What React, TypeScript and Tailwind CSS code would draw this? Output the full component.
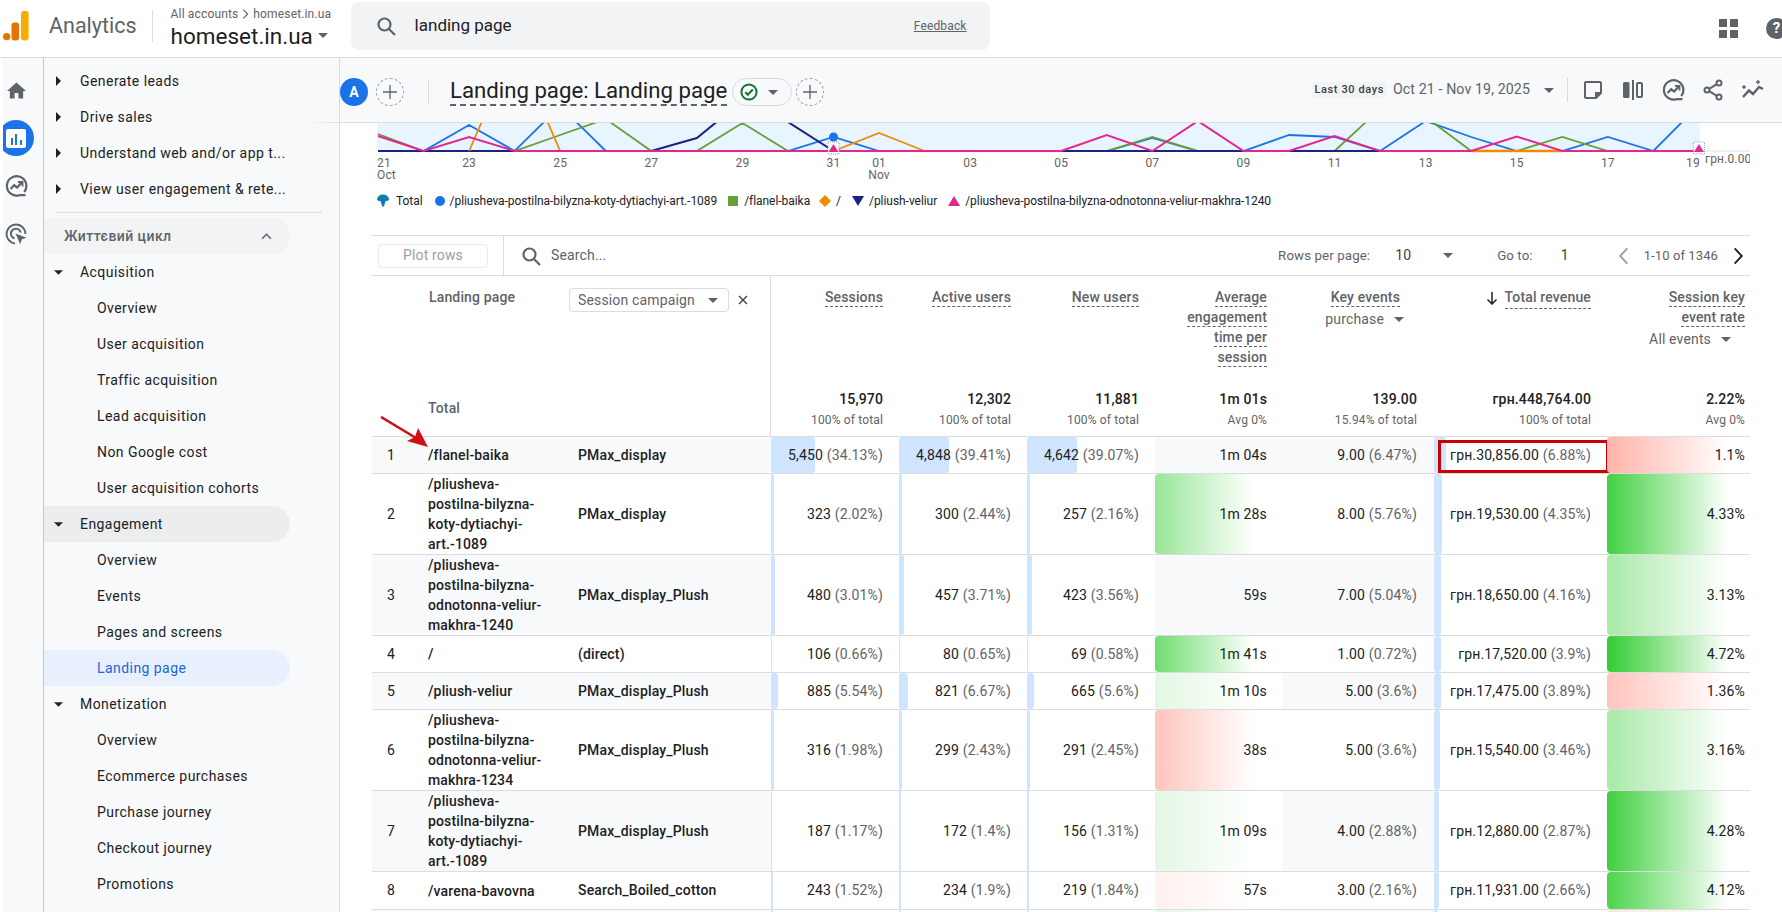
import React from "react";

const X = (d: number) => 378 + 45.55 * d;
const pts = (a: [number, number][]) => a.map(([d, y]) => `${X(d)},${y}`).join(" ");
const BASE = 150;
const series = (over: Record<number, number>, from = 0, to = 29) => {
  const r: [number, number][] = [];
  for (let d = from; d <= to; d++) r.push([d, over[d] ?? BASE]);
  return r;
};
const blue = series({ 2: 124, 4: 105, 5: 150, 10: 136, 20: 134, 21: 136, 23: 120, 24: 136, 17: 137, 27: 136, 29: 104 });
const green = series({ 0: 133, 4: 134, 5: 118, 8: 122, 17: 136, 22: 108, 23: 116, 26: 136 });
const navy = series({ 7: 137, 8: 100, 9: 121 }, 0, 24);
const orange = series({ 3: 45, 11: 132 }, 2, 12);
const orange2 = series({}, 24, 26);
const pink = series({ 0: 135, 2: 136, 16: 134, 18: 120, 21: 135, 25: 135.5 });

const ticks = [
  ["23", 2], ["25", 4], ["27", 6], ["29", 8], ["31", 10], ["01", 11], ["03", 13], ["05", 15], ["07", 17], ["09", 19], ["11", 21], ["13", 23], ["15", 25], ["17", 27],
] as [string, number][];

const I = ({ children, className = "w-6 h-6" }: { children: React.ReactNode; className?: string }) => (
  <svg viewBox="0 0 24 24" className={className} fill="none" stroke="#5f6368" strokeWidth="2">{children}</svg>
);
const CaretDown = ({ className = "" }: { className?: string }) => (
  <svg viewBox="0 0 10 5" className={`w-[10px] h-[5px] ${className}`}><path d="M0 0h10L5 5z" fill="#5f6368" /></svg>
);
const Insights = ({ className = "w-6 h-6" }: { className?: string }) => (
  <I className={className}>
    <path d="M20.2 18A9.7 9.7 0 1 0 15.5 21.2H21.5" strokeWidth="2.2" />
    <path d="M6.5 15l3.7-3.7 3 2.2 4.6-5" strokeWidth="2.2" />
    <path d="M14 8h4.5v4.5" strokeWidth="1.8" />
  </I>
);

const navTop = ["Generate leads", "Drive sales", "Understand web and/or app t...", "View user engagement & rete..."];
const navLife: { t: string; head?: boolean; active?: boolean; hl?: boolean }[] = [
  { t: "Acquisition", head: true },
  { t: "Overview" }, { t: "User acquisition" }, { t: "Traffic acquisition" }, { t: "Lead acquisition" }, { t: "Non Google cost" }, { t: "User acquisition cohorts" },
  { t: "Engagement", head: true, hl: true },
  { t: "Overview" }, { t: "Events" }, { t: "Pages and screens" }, { t: "Landing page", active: true },
  { t: "Monetization", head: true },
  { t: "Overview" }, { t: "Ecommerce purchases" }, { t: "Purchase journey" }, { t: "Checkout journey" }, { t: "Promotions" },
];

type Row = {
  n: string; lp: string; c: string; h: string;
  s: [string, string, number]; a: [string, string, number]; u: [string, string, number];
  e: string; eg?: string; k: [string, string]; r: [string, string, number]; rate: string; rg?: string;
};
const rows: Row[] = [
  { n: "1", lp: "/flanel-baika", c: "PMax_display", h: "h-[37px]", s: ["5,450", "(34.13%)", 34.13], a: ["4,848", "(39.41%)", 39.41], u: ["4,642", "(39.07%)", 39.07], e: "1m 04s", k: ["9.00", "(6.47%)"], r: ["грн.30,856.00", "(6.88%)", 6.88], rate: "1.1%", rg: "#ffb3aa" },
  { n: "2", lp: "/pliusheva-postilna-bilyzna-koty-dytiachyi-art.-1089", c: "PMax_display", h: "h-[81px]", s: ["323", "(2.02%)", 2.02], a: ["300", "(2.44%)", 2.44], u: ["257", "(2.16%)", 2.16], e: "1m 28s", eg: "#98e698", k: ["8.00", "(5.76%)"], r: ["грн.19,530.00", "(4.35%)", 4.35], rate: "4.33%", rg: "#42d142" },
  { n: "3", lp: "/pliusheva-postilna-bilyzna-odnotonna-veliur-makhra-1240", c: "PMax_display_Plush", h: "h-[81px]", s: ["480", "(3.01%)", 3.01], a: ["457", "(3.71%)", 3.71], u: ["423", "(3.56%)", 3.56], e: "59s", k: ["7.00", "(5.04%)"], r: ["грн.18,650.00", "(4.16%)", 4.16], rate: "3.13%", rg: "#a8e9a8" },
  { n: "4", lp: "/", c: "(direct)", h: "h-[37px]", s: ["106", "(0.66%)", 0.66], a: ["80", "(0.65%)", 0.65], u: ["69", "(0.58%)", 0.58], e: "1m 41s", eg: "#6fdc6f", k: ["1.00", "(0.72%)"], r: ["грн.17,520.00", "(3.9%)", 3.9], rate: "4.72%", rg: "#33cc33" },
  { n: "5", lp: "/pliush-veliur", c: "PMax_display_Plush", h: "h-[37px]", s: ["885", "(5.54%)", 5.54], a: ["821", "(6.67%)", 6.67], u: ["665", "(5.6%)", 5.6], e: "1m 10s", eg: "#e2f7e2", k: ["5.00", "(3.6%)"], r: ["грн.17,475.00", "(3.89%)", 3.89], rate: "1.36%", rg: "#ffc4bc" },
  { n: "6", lp: "/pliusheva-postilna-bilyzna-odnotonna-veliur-makhra-1234", c: "PMax_display_Plush", h: "h-[81px]", s: ["316", "(1.98%)", 1.98], a: ["299", "(2.43%)", 2.43], u: ["291", "(2.45%)", 2.45], e: "38s", eg: "#ffc4bc", k: ["5.00", "(3.6%)"], r: ["грн.15,540.00", "(3.46%)", 3.46], rate: "3.16%", rg: "#a8e9a8" },
  { n: "7", lp: "/pliusheva-postilna-bilyzna-koty-dytiachyi-art.-1089", c: "PMax_display_Plush", h: "h-[81px]", s: ["187", "(1.17%)", 1.17], a: ["172", "(1.4%)", 1.4], u: ["156", "(1.31%)", 1.31], e: "1m 09s", eg: "#e4f7e4", k: ["4.00", "(2.88%)"], r: ["грн.12,880.00", "(2.87%)", 2.87], rate: "4.28%", rg: "#3ed03e" },
  { n: "8", lp: "/varena-bavovna", c: "Search_Boiled_cotton", h: "h-[38px]", s: ["243", "(1.52%)", 1.52], a: ["234", "(1.9%)", 1.9], u: ["219", "(1.84%)", 1.84], e: "57s", eg: "#fff1ef", k: ["3.00", "(2.16%)"], r: ["грн.11,931.00", "(2.66%)", 2.66], rate: "4.12%", rg: "#4cd44c" },
  { n: "", lp: "", c: "", h: "h-[37px]", s: ["", "", 1.3], a: ["", "", 1.3], u: ["", "", 1.3], e: "", eg: "#e4f7e4", k: ["", ""], r: ["", "", 2.5], rate: "", rg: "#ffe4e0" },
];
const grid = "grid grid-cols-[56px_150px_193px_128px_128px_128px_128px_151px_173px_143px]";

const Val = ({ v, p }: { v: string; p?: string }) => (
  <span className="relative whitespace-nowrap text-[#202124]">{v}{p ? <span className="text-[#5f6368]"> {p}</span> : null}</span>
);
const BarCell = ({ d, w, pr = "pr-[16px]" }: { d: [string, string, number]; w: number; pr?: string }) => (
  <div className={`relative flex items-center justify-end ${pr}`}>
    <div className="absolute left-0 top-0 bottom-0 rounded-[3px] bg-[#cfe5ff]" style={{ width: Math.max(1, (d[2] / 100) * w) }} />
    <Val v={d[0]} p={d[1]} />
  </div>
);
const Dashed = ({ children }: { children: React.ReactNode }) => (
  <span className="border-b border-dashed border-[#5f6368] pb-px">{children}</span>
);
const HeadCell = ({ children, pr = "pr-[16px]" }: { children: React.ReactNode; pr?: string }) => (
  <div className={`pt-[11px] text-right font-medium leading-5 text-[#5f6368] ${pr}`}>{children}</div>
);
const TotalCell = ({ v, s, pr = "pr-[16px]" }: { v: string; s: string; pr?: string }) => (
  <div className={`pt-[1px] text-right ${pr}`}>
    <div className="font-medium leading-5 text-[#202124]">{v}</div>
    <div className="mt-[3px] text-[12px] leading-4 text-[#5f6368]">{s}</div>
  </div>
);

export default function App() {
  return (
    <div className="relative flex h-[912px] w-[1782px] flex-col overflow-hidden bg-white font-[Roboto,sans-serif] text-[14px] tracking-[0.15px] text-[#202124]">
      {/* top bar */}
      <header className="flex h-[58px] shrink-0 items-center border-b border-[#dadce0] pl-[3px]">
        <svg viewBox="0 0 26 30" className="h-[30px] w-[26px] -mt-[5px]">
          <circle cx="3.7" cy="25.6" r="3.7" fill="#e37400" />
          <rect x="8.5" y="11.5" width="7.6" height="18" rx="3" fill="#e37400" />
          <rect x="18" y="0" width="7.6" height="29.5" rx="3" fill="#f9ab00" />
        </svg>
        <span className="ml-[20px] -mt-[4px] text-[21.5px] tracking-normal text-[#5f6368]">Analytics</span>
        <div className="ml-[15px] -mt-[6px] h-8 w-px bg-[#dadce0]" />
        <div className="ml-[18px] -mt-[2px] flex w-[180px] flex-col">
          <div className="flex items-center text-[12px] leading-4 text-[#5f6368]">
            All accounts
            <svg viewBox="0 0 8 12" className="mx-[4px] h-[12px] w-[7px]"><path d="M1.5 1l5 5-5 5" fill="none" stroke="#5f6368" strokeWidth="1.3" /></svg>
            homeset.in.ua
          </div>
          <div className="flex items-center text-[22.5px] leading-[28px] tracking-normal text-[#202124]">
            homeset.in.ua <CaretDown className="ml-[5px]" />
          </div>
        </div>
        <div className="flex h-12 w-[639px] -mt-[6px] items-center rounded-lg bg-[#f1f3f4] pl-[23px]">
          <svg viewBox="0 0 24 24" className="h-6 w-6" fill="none" stroke="#5f6368" strokeWidth="2.2"><circle cx="10.5" cy="10.5" r="6" /><path d="M15 15l6 6" /></svg>
          <span className="ml-[17px] text-[17px] tracking-normal text-[#202124]">landing page</span>
          <span className="ml-auto mr-[23px] text-[12px] text-[#5f6368] underline">Feedback</span>
        </div>
        <div className="ml-auto flex items-center">
          <div className="grid grid-cols-2 gap-[3px]">
            <div className="h-2 w-2 bg-[#5f6368]" /><div className="h-2 w-2 bg-[#5f6368]" /><div className="h-2 w-2 bg-[#5f6368]" /><div className="h-2 w-2 bg-[#5f6368]" />
          </div>
          <div className="-mr-[5px] ml-[28px] flex h-[21px] w-[21px] items-center justify-center rounded-full bg-[#5f6368] text-[15px] font-bold text-white">?</div>
        </div>
      </header>

      <div className="flex min-h-0 flex-1">
        {/* rail */}
        <div className="flex w-[44px] shrink-0 flex-col gap-3 overflow-hidden border-l-[3px] border-r border-l-white border-r-[#c4c7cc] bg-[#f8f9fa] pt-[14px]">
          <div className="flex h-9 w-[26px] items-center justify-center">
            <svg viewBox="2 3 20 17" className="h-[17px] w-[19px]"><path d="M10 20v-6h4v6h5v-8h3L12 3 2 12h3v8z" fill="#5f6368" /></svg>
          </div>
          <div className="-ml-[5px] flex h-9 w-9 shrink-0 items-center justify-center rounded-full bg-[#1a73e8]">
            <div className="flex h-[19px] w-[20px] items-end justify-center gap-[2.5px] rounded-[2px] bg-white pb-[3px]">
              <div className="h-[7px] w-[2px] bg-[#1a73e8]" /><div className="h-[11px] w-[2px] bg-[#1a73e8]" /><div className="h-[5px] w-[2px] bg-[#1a73e8]" />
            </div>
          </div>
          <div className="flex h-9 w-[26px] items-center justify-center">
            <Insights className="h-[24px] w-[24px]" />
          </div>
          <div className="flex h-9 w-[26px] items-center justify-center">
            <I className="h-[24px] w-[24px]">
              <path d="M11 21.5a9.5 9.5 0 1 1 10.5-9.5" />
              <path d="M10.5 16.5A5 5 0 1 1 16.8 10.5" />
              <path d="M11.5 11.5l11 4.2-4.6 1.6-1.7 5z" fill="#5f6368" stroke="none" />
            </I>
          </div>
        </div>

        {/* nav */}
        <nav className="flex w-[296px] shrink-0 flex-col border-r border-[#dadce0] bg-[#f8f9fa] pt-[5px] tracking-[0.44px]">
          {navTop.map((t) => (
            <div key={t} className="flex h-9 shrink-0 items-center pl-[12px]">
              <svg viewBox="0 0 5 10" className="h-[10px] w-[5px]"><path d="M0 0v10l5-5z" fill="#202124" /></svg>
              <span className="ml-[19px] whitespace-nowrap">{t}</span>
            </div>
          ))}
          <div className="ml-[12px] mr-[17px] mt-[5px] h-px shrink-0 bg-[#dadce0]" />
          <div className="mt-[5px] flex h-9 w-[246px] shrink-0 items-center justify-between rounded-r-full bg-[#f1f3f4] pl-[20px] pr-[18px] font-medium text-[#5f6368]">
            Життєвий цикл
            <svg viewBox="0 0 12 8" className="h-[7px] w-[11px]"><path d="M1 6.5l5-5 5 5" fill="none" stroke="#5f6368" strokeWidth="1.8" /></svg>
          </div>
          {navLife.map((x, i) =>
            x.head ? (
              <div key={i} className={`flex h-9 w-[246px] shrink-0 items-center rounded-r-full pl-[10px] ${x.hl ? "bg-[#ebedef]" : ""}`}>
                <svg viewBox="0 0 10 5" className="h-[5px] w-[9px]"><path d="M0 0h10L5 5z" fill="#202124" /></svg>
                <span className="ml-[17px]">{x.t}</span>
              </div>
            ) : (
              <div key={i} className={`flex h-9 w-[246px] shrink-0 items-center rounded-r-full pl-[53px] ${x.active ? "bg-[#e8f0fe] text-[#1967d2]" : ""}`}>{x.t}</div>
            )
          )}
        </nav>

        {/* main */}
        <main className="relative min-w-0 flex-1">
          <div className="flex h-[65px] items-center border-b border-[#dadce0] bg-[#f8f9fa] pr-[17px] pt-[4px]">
            <div className="flex h-7 w-7 items-center justify-center rounded-full bg-[#1a73e8] text-[14px] font-bold text-white">A</div>
            <div className="ml-2 flex h-7 w-7 items-center justify-center rounded-full border border-dashed border-[#9aa0a6]">
              <svg viewBox="0 0 14 14" className="h-[14px] w-[14px]"><path d="M7 0v14M0 7h14" stroke="#5f6368" strokeWidth="1.3" /></svg>
            </div>
            <div className="ml-[24px] h-6 w-px bg-[#dadce0]" />
            <div className="ml-[21px] -mt-[2px] border-b-2 border-dashed border-[#5f6368] text-[22.2px] leading-[27px] tracking-normal text-[#202124]">Landing page: Landing page</div>
            <div className="ml-[5px] flex h-7 w-[60px] items-center gap-[10px] rounded-full border border-[#dadce0] pl-[7px]">
              <svg viewBox="0 0 18 18" className="h-[18px] w-[18px]" fill="none" stroke="#137333" strokeWidth="2"><circle cx="9" cy="9" r="7.6" /><path d="M5.3 9.2l2.5 2.5 5-5.2" /></svg>
              <CaretDown className="w-[8px]" />
            </div>
            <div className="ml-[4px] flex h-7 w-7 items-center justify-center rounded-full border border-dashed border-[#9aa0a6]">
              <svg viewBox="0 0 14 14" className="h-[14px] w-[14px]"><path d="M7 0v14M0 7h14" stroke="#5f6368" strokeWidth="1.3" /></svg>
            </div>
            <div className="ml-auto -mt-[4px] flex items-center">
              <span className="bg-[#f1f3f4] px-[3px] py-px text-[11px] font-medium leading-[14px] tracking-[0.6px] text-[#3c4043]">Last 30 days</span>
              <span className="ml-[6px] whitespace-nowrap text-[14.2px] tracking-[0.1px] text-[#5f6368]">Oct 21 - Nov 19, 2025</span>
              <CaretDown className="ml-[14px] w-[8px]" />
              <div className="ml-[13px] h-6 w-px bg-[#dadce0]" />
              <I className="ml-[13px] h-6 w-6">
                <path d="M4 5A1 1 0 0 1 5 4h14A1 1 0 0 1 20 5V15l-5 5H5A1 1 0 0 1 4 19z" />
                <path d="M20 14h-6v6z" fill="#5f6368" stroke="none" />
              </I>
              <I className="ml-4 h-6 w-6">
                <rect x="2" y="4" width="6.5" height="16" rx="1.5" fill="#5f6368" stroke="none" />
                <path d="M12 2v20" />
                <rect x="16" y="5" width="5" height="14" rx="1" />
              </I>
              <Insights className="ml-4 h-6 w-6" />
              <I className="ml-4 h-6 w-6">
                <circle cx="18" cy="5" r="2.5" /><circle cx="6" cy="12" r="2.5" /><circle cx="18" cy="19" r="2.5" />
                <path d="M8.2 10.8l7.6-4.6M8.2 13.2l7.6 4.6" />
              </I>
              <I className="ml-4 h-6 w-6">
                <path d="M2 19l6-6.5 4 3.5 6-7 4 2" strokeWidth="2.4" />
                <path d="M3 7v4M1 9h4M17 2v4M15 4h4" strokeWidth="1.3" />
              </I>
            </div>
          </div>
          <div className="absolute -left-[34px] top-[64px] h-px w-[34px] bg-gradient-to-r from-transparent to-[#dadce0]" />

          {/* chart */}
          <svg viewBox="377 122 1373 68" className="ml-[37px] block h-[68px] w-[1373px]">
            <rect x="377" y="122" width="1323" height="28" fill="#e8f5fe" />
            <path d="M1700 150h50" stroke="#e0e0e0" />
            <g fill="none" strokeWidth="1.8">
              <polyline points={pts(blue)} stroke="#1a73e8" />
              <polyline points={pts(green)} stroke="#689f38" />
              <polyline points={pts(navy)} stroke="#1a237e" strokeWidth="2" />
              <polyline points={pts(orange)} stroke="#ef8c00" />
              <polyline points={pts(orange2)} stroke="#ef8c00" strokeWidth="2.4" />
              <polyline points={pts(pink)} stroke="#e52592" strokeWidth="2" />
            </g>
            <circle cx={X(10)} cy="136" r="4.5" fill="#1a73e8" />
            <rect x={X(10) - 5.5} y="141" width="11" height="12" fill="#fff" stroke="#9aa0a6" strokeDasharray="1 1" />
            <path d={`M${X(10) - 5} 151l5 -8l5 8z`} fill="#e52592" />
            <rect x={X(29) - 5.5} y="141" width="11" height="12" fill="#fff" stroke="#9aa0a6" strokeDasharray="1 1" />
            <path d={`M${X(29) - 5} 151l5 -8l5 8z`} fill="#e52592" />
            <g fill="#5f6368" fontSize="12" textAnchor="middle">
              <text x="377" y="166" textAnchor="start">21</text>
              <text x="377" y="178" textAnchor="start">Oct</text>
              {ticks.map(([t, d]) => (<text key={t} x={X(d)} y="166">{t}</text>))}
              <text x={X(11)} y="178">Nov</text>
              <text x="1693" y="166">19</text>
              <text x="1705" y="162" textAnchor="start">грн.0.00</text>
            </g>
          </svg>

          {/* legend */}
          <div className="ml-[37px] flex h-5 items-center whitespace-nowrap text-[12px] tracking-[-0.05px]">
            <svg viewBox="0 0 14 14" className="h-[14px] w-[13px]"><path d="M0 5.5A6.5 5.5 0 0 1 13 5.5c0 .8-1.4 1.6-4 1.9L7.6 13H5.4L4 7.4C1.4 7.1 0 6.3 0 5.5z" fill="#0b7fb3" /></svg>
            <span className="ml-[6px]">Total</span>
            <span className="ml-[12px] h-[10px] w-[10px] rounded-full bg-[#1a73e8]" />
            <span className="ml-[5px]">/pliusheva-postilna-bilyzna-koty-dytiachyi-art.-1089</span>
            <span className="ml-[11px] h-[10px] w-[10px] bg-[#689f38]" />
            <span className="ml-[6px]">/flanel-baika</span>
            <svg viewBox="0 0 12 12" className="ml-[9px] h-3 w-3"><path d="M6 0l6 6-6 6-6-6z" fill="#ef8c00" /></svg>
            <span className="ml-[5px]">/</span>
            <svg viewBox="0 0 12 10" className="ml-[11px] h-[10px] w-3"><path d="M0 0h12L6 10z" fill="#1a237e" /></svg>
            <span className="ml-[5px]">/pliush-veliur</span>
            <svg viewBox="0 0 12 10" className="ml-[11px] h-[10px] w-3"><path d="M0 10h12L6 0z" fill="#e52592" /></svg>
            <span className="ml-[5px]">/pliusheva-postilna-bilyzna-odnotonna-veliur-makhra-1240</span>
          </div>

          {/* table */}
          <div className="ml-[32px] mt-[24px] w-[1378px]">
            <div className="flex h-[41px] items-center border-y border-[#dadce0]">
              <div className="flex h-full w-[132px] items-center border-r border-[#dadce0] pl-[6px]">
                <div className="flex h-6 w-[110px] items-center justify-center rounded-[4px] border border-[#e8eaed] text-[#9aa0a6]">Plot rows</div>
              </div>
              <svg viewBox="0 0 24 24" className="ml-[15px] h-6 w-6" fill="none" stroke="#5f6368" strokeWidth="2.2"><circle cx="10.5" cy="10.5" r="6" /><path d="M15 15l6 6" /></svg>
              <span className="ml-[8px] text-[#5f6368]">Search...</span>
              <div className="ml-auto flex items-center text-[13.3px] tracking-[0.1px] text-[#3c4043]">
                <span className="text-[#5f6368]">Rows per page:</span>
                <span className="ml-[25px] text-[14px]">10</span>
                <CaretDown className="ml-[32px] w-[10px]" />
                <span className="ml-[44px] text-[#5f6368]">Go to:</span>
                <span className="ml-[28px] text-[14px]">1</span>
                <svg viewBox="0 0 10 16" className="ml-[49px] h-[18px] w-[11px]"><path d="M8.5 1L2 8l6.5 7" fill="none" stroke="#9aa0a6" strokeWidth="1.7" /></svg>
                <span className="ml-[15px] text-[13px] text-[#5f6368]">1-10 of 1346</span>
                <svg viewBox="0 0 10 16" className="ml-[15px] mr-[6px] h-[18px] w-[11px]"><path d="M1.5 1L8 8l-6.5 7" fill="none" stroke="#202124" strokeWidth="1.7" /></svg>
              </div>
            </div>

            {/* header */}
            <div className={`${grid} h-[112px]`}>
              <div className="col-span-3 flex border-r border-[#dadce0] pl-[57px]">
                <div className="w-[140px] pt-[11px] font-medium leading-5 text-[#5f6368]">Landing page</div>
                <div className="mt-[12px] flex h-6 w-[160px] items-center justify-between rounded-[4px] border border-[#dadce0] pl-2 pr-[10px] text-[#5f6368]">
                  Session campaign <CaretDown className="w-[8px]" />
                </div>
                <svg viewBox="0 0 10 10" className="ml-[9px] mt-[19px] h-[10px] w-[10px]"><path d="M1 1l8 8M9 1l-8 8" stroke="#3c4043" strokeWidth="1.4" /></svg>
              </div>
              <HeadCell><Dashed>Sessions</Dashed></HeadCell>
              <HeadCell><Dashed>Active users</Dashed></HeadCell>
              <HeadCell><Dashed>New users</Dashed></HeadCell>
              <HeadCell><Dashed>Average</Dashed><br /><Dashed>engagement</Dashed><br /><Dashed>time per</Dashed><br /><Dashed>session</Dashed></HeadCell>
              <HeadCell pr="pr-[34px]">
                <Dashed>Key events</Dashed>
                <div className="mt-[2px] flex items-center justify-end font-normal">purchase<CaretDown className="ml-[10px] w-[8px] -mr-[4px]" /></div>
              </HeadCell>
              <HeadCell>
                <span className="inline-flex items-center">
                  <svg viewBox="0 0 12 14" className="mr-[7px] h-[14px] w-[12px]"><path d="M6 1v12M1.5 8.5L6 13l4.5-4.5" fill="none" stroke="#202124" strokeWidth="1.5" /></svg>
                  <Dashed>Total revenue</Dashed>
                </span>
              </HeadCell>
              <HeadCell pr="pr-[5px]">
                <Dashed>Session key</Dashed><br /><Dashed>event rate</Dashed>
                <div className="mt-[2px] flex items-center justify-end pr-[14px] font-normal">All events<CaretDown className="ml-[10px] w-[8px]" /></div>
              </HeadCell>
            </div>
            <div className={`${grid} h-[49px] border-b border-[#dadce0]`}>
              <div className="col-span-3 border-r border-[#dadce0] pl-[56px] pt-[10px] font-medium text-[#5f6368]">Total</div>
              <TotalCell v="15,970" s="100% of total" />
              <TotalCell v="12,302" s="100% of total" />
              <TotalCell v="11,881" s="100% of total" />
              <TotalCell v="1m 01s" s="Avg 0%" />
              <TotalCell v="139.00" s="15.94% of total" pr="pr-[17px]" />
              <TotalCell v="грн.448,764.00" s="100% of total" />
              <TotalCell v="2.22%" s="Avg 0%" pr="pr-[5px]" />
            </div>

            {/* rows */}
            {rows.map((r, i) => {
              const odd = i % 2 === 0;
              const stripe = odd ? "bg-[#f8f9fa]" : "bg-white";
              return (
                <div key={i} className={`${grid} ${r.h} border-b border-[#dadce0]`}>
                  <div className={`col-span-3 flex items-center ${stripe}`}>
                    <div className="w-[56px] pl-[15px] text-[#202124]">{r.n}</div>
                    <div className="w-[150px] pr-[30px] font-medium leading-5">{r.lp}</div>
                    <div className="font-medium">{r.c}</div>
                  </div>
                  <BarCell d={r.s} w={128} />
                  <BarCell d={r.a} w={128} />
                  <BarCell d={r.u} w={128} />
                  <div className={`relative flex items-center justify-end pr-[16px] ${stripe}`}>
                    {r.eg ? <div className="absolute inset-0 rounded-[4px] bg-white" style={{ backgroundImage: `linear-gradient(90deg, ${r.eg}, #ffffff 98px)` }} /> : null}
                    <Val v={r.e} />
                  </div>
                  <div className={`flex items-center justify-end pr-[17px] ${stripe}`}><Val v={r.k[0]} p={r.k[1]} /></div>
                  <div className="relative">
                    <div className="flex h-full items-center justify-end pr-[16px]">
                      <div className="absolute left-0 top-0 bottom-0 rounded-[3px] bg-[#cfe5ff]" style={{ width: (r.r[2] / 100) * 173 }} />
                      <Val v={r.r[0]} p={r.r[1]} />
                    </div>
                    {i === 0 ? <div className="absolute -right-[2px] top-[3px] bottom-0 left-[4px] border-[3px] border-[#cc0000]" /> : null}
                  </div>
                  <div className="relative flex items-center justify-end pr-[5px]">
                    {r.rg ? <div className="absolute inset-0 rounded-[4px]" style={{ backgroundImage: `linear-gradient(90deg, ${r.rg}, #ffffff 121px)` }} /> : null}
                    <Val v={r.rate} />
                  </div>
                </div>
              );
            })}
          </div>

          {/* annotation arrow */}
          <svg viewBox="0 0 50 32" className="pointer-events-none absolute left-[40px] top-[358px] h-[32px] w-[50px]">
            <path d="M1 1L36 22" stroke="#d01010" strokeWidth="2.6" />
            <path d="M48 31L27 25l8-4 3-9z" fill="#d01010" />
          </svg>
        </main>
      </div>
    </div>
  );
}
